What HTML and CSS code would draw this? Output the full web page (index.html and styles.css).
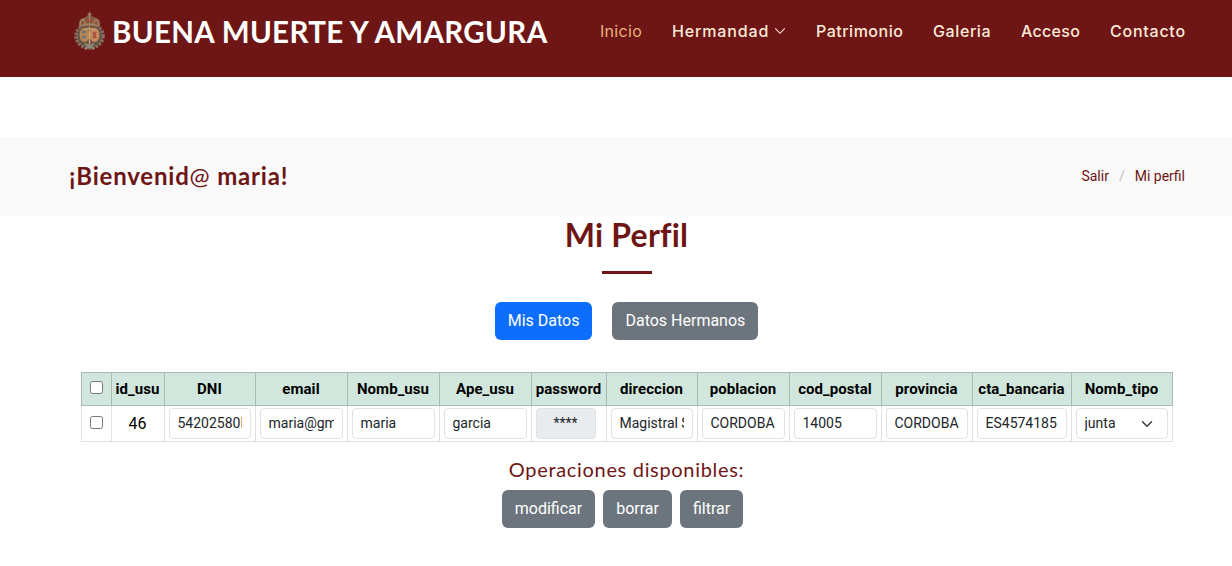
FILE: index.html
```html
<!DOCTYPE html>
<html lang="es">
<head>
<meta charset="utf-8">
<title>Mi Perfil</title>
<link rel="stylesheet" href="styles.css">
</head>
<body>
<header class="header">
  <a class="logo">
    <svg class="crest" viewBox="0 0 33 39" width="33" height="39">
      <ellipse cx="16.5" cy="24" rx="13.5" ry="12" fill="#705249" stroke="#87705f" stroke-width="3.5" stroke-dasharray="2.5 1.2"/>
      <ellipse cx="16.5" cy="23.5" rx="11" ry="11" fill="none" stroke="#565947" stroke-width="2" stroke-dasharray="2 1"/>
      <path d="M6 15Q5 7 10 6L16.5 3L23 6Q28 7 27 15Z" fill="#825b43"/>
      <path d="M7 14Q7 8 11 7M26 14Q26 8 22 7M16.5 0V14M14.5 2.5H18.5M11 8L13 14M22 8L20 14M7 14Q16.5 10 26 14" fill="none" stroke="#a58468" stroke-width="1.3"/>
      <path d="M9 9L11 11M22 11L24 9M14 7L17 10L20 7" stroke="#ad4633" stroke-width="1.3" fill="none"/>
      <ellipse cx="11.5" cy="23" rx="5" ry="7" fill="#b78655"/>
      <ellipse cx="21.5" cy="23" rx="5" ry="7" fill="#c48b60"/>
      <path d="M9 20H13M9 25H13" stroke="#6d7380" stroke-width="2.5"/>
      <path d="M20 20L23 26M23 20L20 26" stroke="#a9523a" stroke-width="1.8"/>
      <path d="M16.5 15V33M12 17H21" stroke="#c4a269" stroke-width="1.4"/>
      <path d="M12 37L21 32M21 37L12 32" stroke="#969184" stroke-width="1.5"/>
    </svg>
    <span class="brand">BUENA MUERTE Y AMARGURA</span>
  </a>
  <nav class="nav">
    <a class="active n1">Inicio</a>
    <a class="n2"><span>Hermandad</span><svg width="12" height="12" viewBox="0 0 16 16"><path d="M1.6 4.6L8 11L14.4 4.6" fill="none" stroke="currentColor" stroke-width="1.4"/></svg></a>
    <a class="n3">Patrimonio</a><a class="n4">Galeria</a><a class="n5">Acceso</a><a class="n6">Contacto</a>
  </nav>
</header>
<main>
<section class="breadcrumbs">
  <h2>¡Bienvenid<span class="at">@</span> maria!</h2>
  <div class="crumbs"><a>Salir</a><span>/</span><a>Mi perfil</a></div>
</section>
<section class="profile">
  <h1>Mi Perfil</h1>
  <div class="rule"></div>
  <div class="tabs"><button class="btn primary">Mis Datos</button><button class="btn">Datos Hermanos</button></div>
  <table class="data">
    <colgroup><col class="c30"><col class="c53"><col class="c91"><col class="c92"><col class="c92"><col class="c92"><col class="c75"><col class="c91"><col class="c92"><col class="c92"><col class="c91"><col class="c99"><col class="c101"></colgroup>
    <thead><tr><th><input type="checkbox" class="check"></th><th>id_usu</th><th>DNI</th><th>email</th><th>Nomb_usu</th><th>Ape_usu</th><th>password</th><th>direccion</th><th>poblacion</th><th>cod_postal</th><th>provincia</th><th>cta_bancaria</th><th>Nomb_tipo</th></tr></thead>
    <tbody><tr>
      <td><input type="checkbox" class="check"></td><td>46</td>
      <td><div class="field"><span>54202580L</span></div></td>
      <td><div class="field"><span>maria@gm</span></div></td>
      <td><div class="field"><span>maria</span></div></td>
      <td><div class="field"><span>garcia</span></div></td>
      <td><div class="field password"><span>****</span></div></td>
      <td><div class="field"><span>Magistral S</span></div></td>
      <td><div class="field"><span>CORDOBA</span></div></td>
      <td><div class="field"><span>14005</span></div></td>
      <td><div class="field"><span>CORDOBA</span></div></td>
      <td><div class="field"><span>ES4574185</span></div></td>
      <td><div class="field select"><span>junta</span><svg width="12" height="12" viewBox="0 0 16 16"><path d="M2 5L8 11L14 5" fill="none" stroke="#343a40" stroke-width="2" stroke-linecap="round" stroke-linejoin="round"/></svg></div></td>
    </tr></tbody>
  </table>
  <h5>Operaciones disponibles:</h5>
  <div class="actions"><button class="btn">modificar</button><button class="btn">borrar</button><button class="btn">filtrar</button></div>
</section>
</main>
</body>
</html>
```
FILE: styles.css
```css
* { box-sizing: border-box; }
body { margin: 0; height: 566px; overflow: hidden; background: #fff; font: 16px/24px Roboto, sans-serif; color: #000; }
.header { height: 77px; padding: 0 46px 14px 73px; background: #6e1515; display: flex; align-items: center; justify-content: space-between; }
.logo { display: flex; align-items: center; gap: 6px; color: #fff; }
.crest { display: block; }
.brand { font: 700 29.5px/36px Lato, sans-serif; letter-spacing: .33px; white-space: nowrap; }
.nav { display: flex; gap: 30px; padding-bottom: 2px; font: 500 16px/24px Inter, sans-serif; color: #faebd7; }
.nav a { display: flex; align-items: center; white-space: nowrap; }
.nav .active { color: #e6b27c; font-weight: 400; }
.n1 { width: 42px; letter-spacing: .3px; }
.n2 { width: 114px; justify-content: space-between; letter-spacing: .85px; }
.n3 { width: 87px; letter-spacing: .5px; }
.n4 { width: 58px; letter-spacing: .6px; }
.n5 { width: 59px; letter-spacing: .3px; }
.n6 { width: 76px; letter-spacing: .75px; }
.breadcrumbs { margin-top: 60px; height: 79px; padding: 0 47px 2px 69px; background: #f9f9f9; display: flex; align-items: center; justify-content: space-between; color: #6e1515; }
h2 { margin: 0; font: 700 24px/30px Lato, sans-serif; letter-spacing: .8px; }
.at { font-weight: 400; }
.crumbs { display: flex; gap: 10px; font-size: 14px; }
.crumbs span { color: #bbb; }
.profile { display: flex; flex-direction: column; align-items: center; padding-left: 21px; }
h1 { margin: 0; font: 700 32px/38px Lato, sans-serif; letter-spacing: .2px; font-variant-ligatures: common-ligatures; color: #6e1515; }
.rule { width: 50px; height: 3px; margin-top: 17px; background: #6e1515; }
.tabs { display: flex; gap: 20px; margin-top: 28px; }
.btn { height: 38px; padding: 0 13px; border: 0; border-radius: 6px; background: #6c757d; color: #fff; font: 16px/24px Roboto, sans-serif; }
.primary { background: #0d6efd; }
.data { width: 1092px; margin-top: 32px; table-layout: fixed; border-collapse: collapse; }
.c30 { width: 30px; } .c53 { width: 53px; } .c75 { width: 75px; } .c91 { width: 91px; }
.c92 { width: 92px; } .c99 { width: 99px; } .c101 { width: 101px; }
th, td { padding: 0 4px; text-align: center; vertical-align: middle; }
th { height: 33px; padding: 0; border: 1px solid #a7b9b1; background: #d1e7dd; font-weight: 700; font-size: 15px; letter-spacing: .05px; white-space: nowrap; }
td { height: 36px; border: 1px solid #dee2e6; }
.check { display: block; width: 13px; height: 13px; margin: -4px auto 0; }
td .check { margin-top: -2px; }
.field { height: 31px; padding: 0 8px; border: 1px solid #dee2e6; border-radius: 4px; display: flex; align-items: center; justify-content: space-between; font-size: 14px; line-height: 21px; color: #212529; text-align: left; }
.field span { overflow: hidden; white-space: nowrap; }
.password { width: 60px; background: #e9ecef; justify-content: center; }
.select { padding-right: 14px; }
h5 { margin: 15px 0 9px; font: 400 20px/24px Lato, sans-serif; letter-spacing: .68px; color: #6e1515; }
.actions { display: flex; gap: 8px; padding-right: 8px; }
```
